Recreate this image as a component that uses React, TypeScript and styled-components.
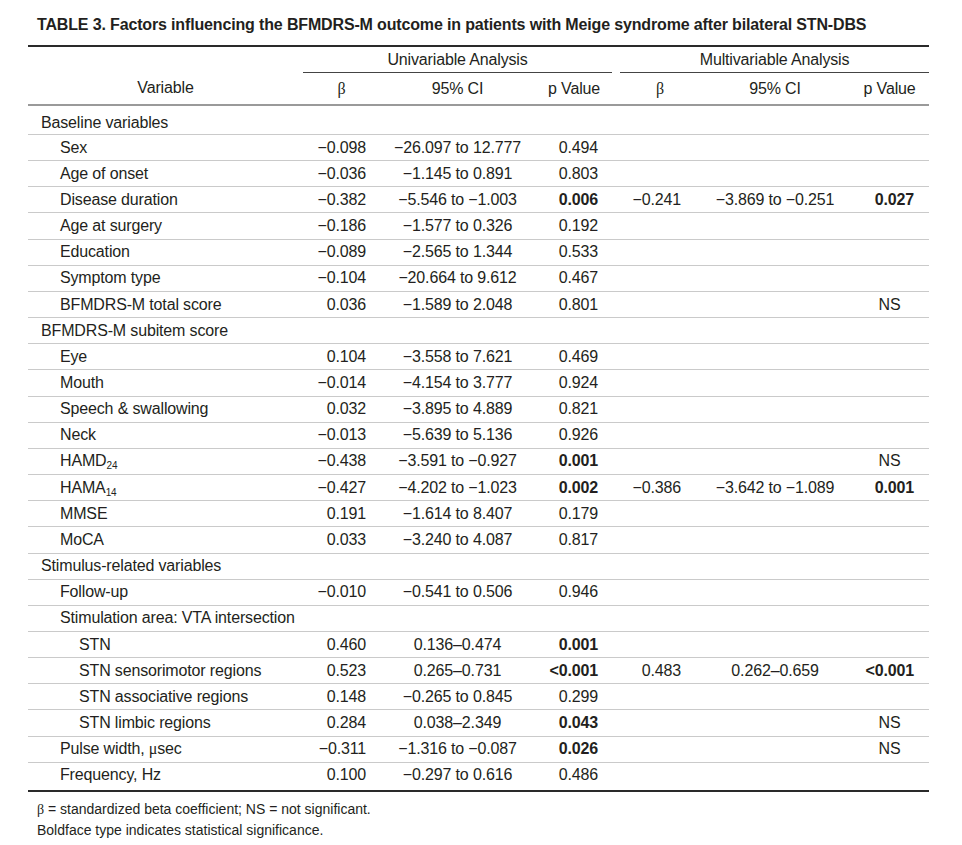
import React from "react";
import styled, { createGlobalStyle } from "styled-components";

const Global = createGlobalStyle`
  html, body { margin: 0; padding: 0; background: #fff; }
  body { font-family: "Liberation Sans", Arial, sans-serif; color: #231f20; }
`;

const Page = styled.div`
  width: 962px;
  height: 845px;
  box-sizing: border-box;
  padding: 14px 33px 0 28px;
  overflow: hidden;
`;

const Title = styled.h1`
  margin: 0 0 9px 9px;
  font-size: 16px;
  letter-spacing: -0.15px;
  line-height: 22px;
  font-weight: 700;
  white-space: nowrap;
`;

const Table = styled.table`
  width: 901px;
  border-collapse: collapse;
  table-layout: fixed;
  font-size: 16px;
  letter-spacing: -0.15px;
  border-top: 2px solid #2a2a2a;
`;

const GroupHead = styled.th<{ $line?: boolean }>`
  height: 25px;
  padding: 0;
  font-weight: 400;
  text-align: center;
  vertical-align: middle;
  border-bottom: ${(p) => (p.$line ? "1px solid #444" : "none")};
`;

const ColHead = styled.th<{ $align?: string; $pr?: number }>`
  height: 31px;
  padding: 0 ${(p) => p.$pr ?? 0}px 0 0;
  font-weight: 400;
  text-align: ${(p) => p.$align ?? "center"};
  vertical-align: middle;
  border-bottom: 2px solid #9a9a9a;
`;

const Row = styled.tr<{ $first?: boolean; $last?: boolean }>`
  height: ${(p) => (p.$first ? "29.5px" : p.$last ? "28.5px" : "26.17px")};
  & > td {
    border-bottom: ${(p) => (p.$last ? "2px solid #2a2a2a" : "1px solid #cacaca")};
    padding-top: ${(p) => (p.$first ? "5px" : "0")};
    padding-bottom: ${(p) => (p.$last ? "3px" : "0")};
  }
`;

const LabelCell = styled.td<{ $level: number }>`
  padding: 0 0 0 ${(p) => 13 + p.$level * 19}px;
  white-space: nowrap;
  vertical-align: middle;
`;

const NumCell = styled.td<{ $align: string; $pr?: number; $bold?: boolean }>`
  padding: 0 ${(p) => p.$pr ?? 0}px 0 0;
  text-align: ${(p) => p.$align};
  font-weight: ${(p) => (p.$bold ? 700 : 400)};
  white-space: nowrap;
  vertical-align: middle;
`;

const Greek = styled.span`
  font-family: "Liberation Serif", "Times New Roman", serif;
`;

const Sub = styled.sub`
  font-size: 10px;
  vertical-align: -3px;
  line-height: 0;
`;

const Notes = styled.div`
  margin: 7px 0 0 9px;
  font-size: 14px;
  line-height: 21px;
`;

type Cell = string | { b: string };
type RowData = {
  label: React.ReactNode;
  level: number;
  v?: Cell[];
};

const b = (s: string) => ({ b: s });

const rows: RowData[] = [
  { label: "Baseline variables", level: 0 },
  { label: "Sex", level: 1, v: ["−0.098", "−26.097 to 12.777", "0.494"] },
  { label: "Age of onset", level: 1, v: ["−0.036", "−1.145 to 0.891", "0.803"] },
  { label: "Disease duration", level: 1, v: ["−0.382", "−5.546 to −1.003", b("0.006"), "−0.241", "−3.869 to −0.251", b("0.027")] },
  { label: "Age at surgery", level: 1, v: ["−0.186", "−1.577 to 0.326", "0.192"] },
  { label: "Education", level: 1, v: ["−0.089", "−2.565 to 1.344", "0.533"] },
  { label: "Symptom type", level: 1, v: ["−0.104", "−20.664 to 9.612", "0.467"] },
  { label: "BFMDRS-M total score", level: 1, v: ["0.036", "−1.589 to 2.048", "0.801", "", "", "NS"] },
  { label: "BFMDRS-M subitem score", level: 0 },
  { label: "Eye", level: 1, v: ["0.104", "−3.558 to 7.621", "0.469"] },
  { label: "Mouth", level: 1, v: ["−0.014", "−4.154 to 3.777", "0.924"] },
  { label: "Speech & swallowing", level: 1, v: ["0.032", "−3.895 to 4.889", "0.821"] },
  { label: "Neck", level: 1, v: ["−0.013", "−5.639 to 5.136", "0.926"] },
  { label: <>HAMD<Sub>24</Sub></>, level: 1, v: ["−0.438", "−3.591 to −0.927", b("0.001"), "", "", "NS"] },
  { label: <>HAMA<Sub>14</Sub></>, level: 1, v: ["−0.427", "−4.202 to −1.023", b("0.002"), "−0.386", "−3.642 to −1.089", b("0.001")] },
  { label: "MMSE", level: 1, v: ["0.191", "−1.614 to 8.407", "0.179"] },
  { label: "MoCA", level: 1, v: ["0.033", "−3.240 to 4.087", "0.817"] },
  { label: "Stimulus-related variables", level: 0 },
  { label: "Follow-up", level: 1, v: ["−0.010", "−0.541 to 0.506", "0.946"] },
  { label: "Stimulation area: VTA intersection", level: 1 },
  { label: "STN", level: 2, v: ["0.460", "0.136–0.474", b("0.001")] },
  { label: "STN sensorimotor regions", level: 2, v: ["0.523", "0.265–0.731", b("<0.001"), "0.483", "0.262–0.659", b("<0.001")] },
  { label: "STN associative regions", level: 2, v: ["0.148", "−0.265 to 0.845", "0.299"] },
  { label: "STN limbic regions", level: 2, v: ["0.284", "0.038–2.349", b("0.043"), "", "", "NS"] },
  { label: <>Pulse width, <Greek>μ</Greek>sec</>, level: 1, v: ["−0.311", "−1.316 to −0.087", b("0.026"), "", "", "NS"] },
  { label: "Frequency, Hz", level: 1, v: ["0.100", "−0.297 to 0.616", "0.486"] },
];

const colSpec = [
  { align: "right", pr: 14 },
  { align: "center", pr: 0 },
  { align: "right", pr: 14 },
  { align: "right", pr: 19 },
  { align: "center", pr: 0 },
  { align: "right", pr: 15 },
];

function renderCell(c: Cell | undefined, i: number) {
  const spec = colSpec[i];
  const bold = typeof c === "object";
  const text = c === undefined ? "" : typeof c === "object" ? c.b : c;
  const isNS = text === "NS";
  return (
    <NumCell key={i} $align={isNS ? "center" : spec.align} $pr={isNS ? 0 : spec.pr} $bold={bold}>
      {text}
    </NumCell>
  );
}

export default function App() {
  return (
    <Page>
      <Global />
      <Title>
        TABLE 3. Factors influencing the BFMDRS-M outcome in patients with Meige syndrome after bilateral STN-DBS
      </Title>
      <Table>
        <colgroup>
          <col style={{ width: 275 }} />
          <col style={{ width: 77 }} />
          <col style={{ width: 155 }} />
          <col style={{ width: 77 }} />
          <col style={{ width: 8 }} />
          <col style={{ width: 80 }} />
          <col style={{ width: 150 }} />
          <col style={{ width: 79 }} />
        </colgroup>
        <thead>
          <tr>
            <GroupHead />
            <GroupHead colSpan={3} $line>Univariable Analysis</GroupHead>
            <GroupHead />
            <GroupHead colSpan={3} $line>Multivariable Analysis</GroupHead>
          </tr>
          <tr>
            <ColHead>Variable</ColHead>
            <ColHead><Greek>β</Greek></ColHead>
            <ColHead>95% CI</ColHead>
            <ColHead $align="right" $pr={12}>p Value</ColHead>
            <ColHead />
            <ColHead><Greek>β</Greek></ColHead>
            <ColHead>95% CI</ColHead>
            <ColHead>p Value</ColHead>
          </tr>
        </thead>
        <tbody>
          {rows.map((r, idx) => {
            const v = r.v ?? [];
            return (
              <Row key={idx} $first={idx === 0} $last={idx === rows.length - 1}>
                <LabelCell $level={r.level}>{r.label}</LabelCell>
                {renderCell(v[0], 0)}
                {renderCell(v[1], 1)}
                {renderCell(v[2], 2)}
                <td />
                {renderCell(v[3], 3)}
                {renderCell(v[4], 4)}
                {renderCell(v[5], 5)}
              </Row>
            );
          })}
        </tbody>
      </Table>
      <Notes>
        <div><Greek>β</Greek> = standardized beta coefficient; NS = not significant.</div>
        <div>Boldface type indicates statistical significance.</div>
      </Notes>
    </Page>
  );
}
